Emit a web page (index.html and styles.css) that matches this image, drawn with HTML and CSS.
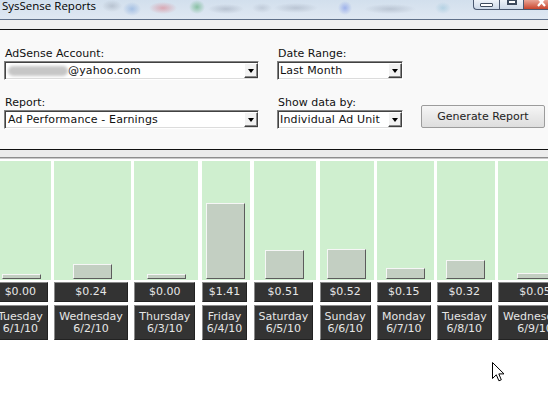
FILE: index.html
```html
<!DOCTYPE html>
<html>
<head>
<meta charset="utf-8">
<title>SysSense Reports</title>
<link rel="stylesheet" href="styles.css">
</head>
<body>
<div class="titlebar">
  <span class="title">SysSense Reports</span>
  <div class="controls">
    <span class="wbtn min"><i class="min-icon"></i></span>
    <span class="wbtn max"><i class="max-icon"></i></span>
    <span class="wbtn close"><svg width="12" height="8" viewBox="0 0 12 8"><path d="M2 -2 L9 6 M9 -2 L2 6" stroke="#fff" stroke-width="2.2" fill="none"/></svg></span>
  </div>
</div>
<div class="toolbar"></div>
<div class="form">
  <div class="field f-account">
    <label class="lbl">AdSense Account:</label>
    <div class="select wide"><span class="blur"></span><span class="val-text">@yahoo.com</span><span class="arrow"><i></i></span></div>
  </div>
  <div class="field f-range">
    <label class="lbl">Date Range:</label>
    <div class="select narrow"><span class="val-text">Last Month</span><span class="arrow"><i></i></span></div>
  </div>
  <div class="field f-report">
    <label class="lbl">Report:</label>
    <div class="select wide"><span class="val-text">Ad Performance - Earnings</span><span class="arrow"><i></i></span></div>
  </div>
  <div class="field f-show">
    <label class="lbl">Show data by:</label>
    <div class="select narrow"><span class="val-text">Individual Ad Unit</span><span class="arrow"><i></i></span></div>
  </div>
  <div class="gen">Generate Report</div>
</div>
<div class="sep"></div>
<div class="chart">
  <div class="cols">
    <div class="col"><div class="plot"><div class="bar" style="height:5px"></div></div><div class="val">$0.00</div><div class="date">Tuesday<br>6/1/10</div></div>
    <div class="col"><div class="plot"><div class="bar" style="height:15px"></div></div><div class="val">$0.24</div><div class="date">Wednesday<br>6/2/10</div></div>
    <div class="col"><div class="plot"><div class="bar" style="height:5px"></div></div><div class="val">$0.00</div><div class="date">Thursday<br>6/3/10</div></div>
    <div class="col"><div class="plot"><div class="bar" style="height:76px"></div></div><div class="val">$1.41</div><div class="date">Friday<br>6/4/10</div></div>
    <div class="col"><div class="plot"><div class="bar" style="height:29px"></div></div><div class="val">$0.51</div><div class="date">Saturday<br>6/5/10</div></div>
    <div class="col"><div class="plot"><div class="bar" style="height:30px"></div></div><div class="val">$0.52</div><div class="date">Sunday<br>6/6/10</div></div>
    <div class="col"><div class="plot"><div class="bar" style="height:11px"></div></div><div class="val">$0.15</div><div class="date">Monday<br>6/7/10</div></div>
    <div class="col"><div class="plot"><div class="bar" style="height:19px"></div></div><div class="val">$0.32</div><div class="date">Tuesday<br>6/8/10</div></div>
    <div class="col"><div class="plot"><div class="bar" style="height:6px"></div></div><div class="val">$0.05</div><div class="date">Wednesday<br>6/9/10</div></div>
  </div>
</div>
<svg class="cursor" width="13" height="20" viewBox="0 0 13 20"><path d="M0.5 0.5 L0.5 16.5 L4.3 12.8 L6.9 18.8 L9.3 17.8 L6.8 11.9 L12 11.9 Z" fill="#fff" stroke="#000" stroke-width="1" stroke-linejoin="miter"/></svg>
</body>
</html>
```
FILE: styles.css
```css
* { box-sizing: border-box; }
html, body { margin: 0; padding: 0; }
body {
  width: 548px;
  height: 411px;
  overflow: hidden;
  position: relative;
  background: #fefefe;
  font-family: "DejaVu Sans", Verdana, sans-serif;
  font-size: 11px;
  color: #111;
}

/* title bar */
.titlebar {
  height: 20px;
  border-bottom: 1px solid #5f7089;
  display: flex;
  justify-content: space-between;
  align-items: flex-start;
  background:
    radial-gradient(10px 6px at 112px 6px, rgba(140,150,165,.4), rgba(140,150,165,0)),
    radial-gradient(9px 7px at 132px 9px, rgba(90,140,210,.4), rgba(90,140,210,0)),
    radial-gradient(14px 6px at 163px 8px, rgba(220,80,90,.4), rgba(220,80,90,0)),
    radial-gradient(8px 7px at 197px 7px, rgba(60,160,90,.5), rgba(60,160,90,0)),
    radial-gradient(18px 5px at 226px 9px, rgba(110,120,140,.3), rgba(110,120,140,0)),
    radial-gradient(10px 5px at 262px 8px, rgba(110,120,140,.22), rgba(110,120,140,0)),
    radial-gradient(22px 5px at 296px 8px, rgba(110,120,140,.28), rgba(110,120,140,0)),
    radial-gradient(7px 7px at 345px 8px, rgba(90,120,230,.45), rgba(90,120,230,0)),
    radial-gradient(26px 5px at 390px 9px, rgba(110,120,140,.28), rgba(110,120,140,0)),
    radial-gradient(8px 6px at 443px 8px, rgba(100,170,200,.3), rgba(100,170,200,0)),
    linear-gradient(#d2dfed, #dfe8f2);
}
.title {
  font-family: "Open Sans", "Noto Sans", sans-serif;
  font-size: 11.5px;
  line-height: 14px;
  margin-top: -1px;
  padding-left: 2px;
  color: #000;
}
.controls { display: flex; }
.wbtn {
  height: 10px;
  border: 1px solid #4a5870;
  border-top: 0;
  background: linear-gradient(#eef3f9, #cdd9e8);
  display: flex;
  justify-content: center;
  align-items: flex-start;
}
.wbtn.min { width: 26px; border-right: 0; border-radius: 0 0 0 4px; }
.wbtn.max { width: 24px; border-right: 0; }
.wbtn.close {
  width: 25px;
  border-right: 0;
  background: linear-gradient(#e8a596, #c9452d);
  justify-content: flex-end;
}
.min-icon {
  display: block;
  width: 13px;
  height: 4px;
  margin-top: 3px;
  background: #fff;
  border: 1px solid #3d4a5c;
  border-radius: 1px;
}
.max-icon {
  display: block;
  width: 10px;
  height: 6px;
  margin-top: -1px;
  border: 1px solid #3d4a5c;
  background: #fff;
  box-shadow: inset 0 0 0 1px #3d4a5c;
}

.toolbar {
  height: 10px;
  background: #efefef;
  border-bottom: 1px solid #111;
}

/* form */
.form {
  height: 120px;
  padding: 17px 0 0 4px;
  background: #f9f9f9;
  border-bottom: 1px solid #111;
  display: grid;
  grid-template-columns: 255px 126px 124px;
  grid-template-rows: 33px 33px;
  row-gap: 16px;
  column-gap: 18px;
  align-content: start;
}
.f-account { grid-column: 1; grid-row: 1; }
.f-range { grid-column: 2; grid-row: 1; }
.f-report { grid-column: 1; grid-row: 2; }
.f-show { grid-column: 2; grid-row: 2; }
.lbl {
  display: block;
  line-height: 13px;
  margin-bottom: 1px;
  padding-left: 1px;
  color: #111;
}
.select {
  height: 19px;
  background: #fff;
  border: 1px solid;
  border-color: #828282 #fff #fff #828282;
  box-shadow: inset 1px 1px 0 #424242, inset -1px -1px 0 #dcdcdc;
  display: flex;
  align-items: center;
  padding-left: 3px;
  white-space: nowrap;
  overflow: hidden;
}
.select.narrow { padding-left: 2px; }
.val-text { color: #111; letter-spacing: 0.15px; }
.blur {
  display: inline-block;
  width: 60px;
  height: 10px;
  background: #c6c6c6;
  border-radius: 5px;
  filter: blur(1.5px);
}
.arrow {
  margin-left: auto;
  flex: none;
  width: 14px;
  height: 15px;
  background: #f2f2f2;
  border: 1px solid;
  border-color: #fff #404040 #404040 #fff;
  box-shadow: inset -1px -1px 0 #8a8a8a;
  display: flex;
  justify-content: center;
  align-items: center;
}
.arrow i {
  display: block;
  width: 0;
  height: 0;
  border-left: 3.5px solid transparent;
  border-right: 3.5px solid transparent;
  border-top: 4px solid #000;
  margin-right: 1px;
}
.gen {
  grid-column: 3;
  grid-row: 2;
  align-self: end;
  height: 23px;
  margin-bottom: 1px;
  border: 1px solid #9c9c9c;
  border-radius: 2px;
  background: linear-gradient(#f6f6f6, #e9e9e9 50%, #dedede);
  display: flex;
  justify-content: center;
  align-items: center;
  color: #222;
}

/* separator */
.sep {
  height: 8px;
  background: #ececec;
  border-bottom: 1px solid #8e8e8e;
}

/* chart */
.chart {
  height: 253px;
  border-top: 1px solid #c9c9c9;
  padding-top: 2px;
  background: #fff;
  overflow: hidden;
}
.cols {
  display: flex;
  gap: 3.4px;
  margin-left: -7px;
  width: max-content;
}
.col {
  flex: none;
  display: flex;
  flex-direction: column;
}
.plot {
  height: 119px;
  background: #cfefcf;
  display: flex;
  justify-content: center;
  align-items: flex-end;
  padding-bottom: 1px;
}
.bar {
  width: 39px;
  background: #c3cfc2;
  border: 1px solid;
  border-color: #f6f6f6 #5c5c5c #5c5c5c #f6f6f6;
}
.val, .date {
  background: #333;
  border: 1px solid;
  border-color: #8a8a8a #222 #222 #8a8a8a;
  color: #e6e6e6;
  text-align: center;
  white-space: nowrap;
  margin-right: 3px;
  padding: 0 4px;
}
.val {
  margin-top: 2px;
  height: 20px;
  line-height: 18px;
}
.date {
  margin-top: 3px;
  height: 35px;
  padding-top: 5px;
  line-height: 12px;
}

.cursor {
  position: absolute;
  left: 492px;
  top: 362px;
}
```
